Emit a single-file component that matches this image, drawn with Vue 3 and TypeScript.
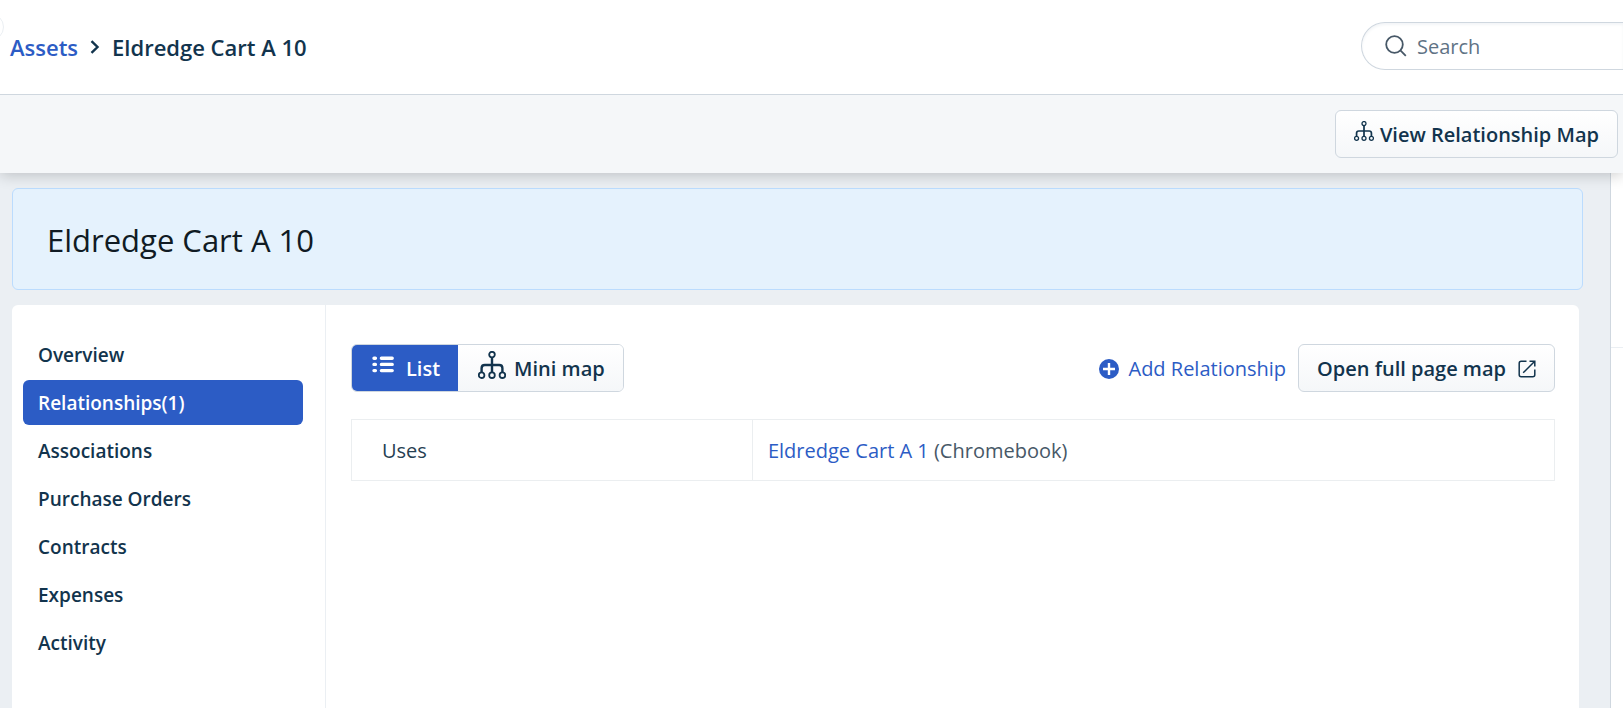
<script setup lang="ts">
import { ref } from 'vue'

interface NavItem {
  id: string
  label: string
}

const navItems: NavItem[] = [
  { id: 'overview', label: 'Overview' },
  { id: 'relationships', label: 'Relationships(1)' },
  { id: 'associations', label: 'Associations' },
  { id: 'purchase-orders', label: 'Purchase Orders' },
  { id: 'contracts', label: 'Contracts' },
  { id: 'expenses', label: 'Expenses' },
  { id: 'activity', label: 'Activity' },
]

const activeNav = ref('relationships')
const view = ref<'list' | 'map'>('list')
const query = ref('')
</script>

<template>
  <div class="page">
    <header class="topbar">
      <button class="collapse" type="button" aria-label="Toggle menu"></button>
      <nav class="crumbs" aria-label="Breadcrumb">
        <a href="#assets">Assets</a>
        <svg class="chevron" viewBox="0 0 10 16" aria-hidden="true">
          <path d="M1.5 2.2 7.5 8l-6 5.8" />
        </svg>
        <span>Eldredge Cart A 10</span>
      </nav>
      <label class="search">
        <svg viewBox="0 0 22 22" aria-hidden="true">
          <circle cx="9.5" cy="9.5" r="8.3" />
          <path d="m15.4 15.4 5.4 5.4" />
        </svg>
        <input v-model="query" type="text" placeholder="Search" aria-label="Search" />
      </label>
    </header>

    <div class="actions">
      <button class="btn view-map" type="button">
        <svg class="tree small" viewBox="0 0 28 28" aria-hidden="true">
          <circle cx="14" cy="3.6" r="2.8" />
          <circle cx="3.6" cy="24.2" r="2.8" />
          <circle cx="14" cy="24.2" r="2.8" />
          <circle cx="24.4" cy="24.2" r="2.8" />
          <path d="M14 6.4v15M3.6 21.4v-4.2q0-3.2 3.2-3.2h14.4q3.2 0 3.2 3.2v4.2" />
        </svg>
        View Relationship Map
      </button>
    </div>

    <div class="body">
      <main class="content">
        <section class="banner">
          <h1>Eldredge Cart A 10</h1>
        </section>

        <div class="card">
          <nav class="side" aria-label="Asset sections">
            <a
              v-for="item in navItems"
              :key="item.id"
              :href="'#' + item.id"
              :class="{ active: item.id === activeNav }"
              @click.prevent="activeNav = item.id"
            >{{ item.label }}</a>
          </nav>

          <section class="panel">
            <div class="toolbar">
              <div class="toggle">
                <button type="button" :class="{ on: view === 'list' }" @click="view = 'list'">
                  <svg class="list-icon" viewBox="0 0 22 17" aria-hidden="true">
                    <path d="M2 2.2h1.4M2 8.4h1.4M2 14.6h1.4M9.4 2.2h10.8M9.4 8.4h10.8M9.4 14.6h10.8" />
                  </svg>
                  List
                </button>
                <button type="button" :class="{ on: view === 'map' }" @click="view = 'map'">
                  <svg class="tree" viewBox="0 0 28 28" aria-hidden="true">
                    <circle cx="14" cy="3.6" r="2.8" />
                    <circle cx="3.6" cy="24.2" r="2.8" />
                    <circle cx="14" cy="24.2" r="2.8" />
                    <circle cx="24.4" cy="24.2" r="2.8" />
                    <path d="M14 6.4v15M3.6 21.4v-4.2q0-3.2 3.2-3.2h14.4q3.2 0 3.2 3.2v4.2" />
                  </svg>
                  Mini map
                </button>
              </div>
              <a class="add" href="#add">
                <svg viewBox="0 0 20 20" aria-hidden="true">
                  <circle cx="10" cy="10" r="10" />
                  <path d="M10 4v12M4 10h12" />
                </svg>
                Add Relationship
              </a>
              <button class="btn open-map" type="button">
                Open full page map
                <svg viewBox="0 0 18 18" aria-hidden="true">
                  <path d="M8.5 1.2H3.2q-2 0-2 2v11.6q0 2 2 2h11.6q2 0 2-2V9.5M11.5 1.2h5.3v5.3M16.5 1.5 5.2 12.8" />
                </svg>
              </button>
            </div>

            <table>
              <tbody>
                <tr>
                  <th scope="row">Uses</th>
                  <td><a href="#cart-a-1">Eldredge Cart A 1</a> (Chromebook)</td>
                </tr>
              </tbody>
            </table>
          </section>
        </div>
      </main>
      <aside class="rail"><div class="rail-head"></div></aside>
    </div>
  </div>
</template>

<style>
body {
  margin: 0;
  overflow: hidden;
}
</style>

<style scoped>
.page {
  display: flex;
  flex-direction: column;
  min-height: 100vh;
  font-family: 'Open Sans', 'Noto Sans', sans-serif;
  font-size: 20px;
  line-height: 28px;
  color: #12344d;
  background: #ebeff3;
}
.page * {
  box-sizing: border-box;
}
a {
  color: #2c5cc5;
  text-decoration: none;
}
button,
input {
  font: inherit;
  color: inherit;
}
svg {
  flex: none;
  fill: none;
  stroke: currentColor;
}
.topbar {
  position: relative;
  z-index: 2;
  display: flex;
  align-items: center;
  justify-content: space-between;
  height: 95px;
  padding: 0 0 2px 10px;
  background: #fff;
  border-bottom: 1px solid #cfd7df;
}
.collapse {
  position: absolute;
  left: -24px;
  top: 13px;
  width: 28px;
  height: 28px;
  padding: 0;
  background: #fff;
  border: 1px solid #ebeff3;
  border-radius: 50%;
}
.crumbs {
  display: flex;
  align-items: center;
  padding-top: 2px;
  font-size: 22px;
  font-weight: 600;
}
.chevron {
  width: 10px;
  height: 16px;
  margin: 0 12px;
  stroke-width: 2.4;
}
.search {
  display: flex;
  align-items: center;
  gap: 10px;
  width: 262px;
  height: 48px;
  padding-left: 23px;
  color: #475867;
  border: 1px solid #cfd7df;
  border-right: 0;
  border-radius: 24px 0 0 24px;
  box-shadow: inset 0 2px 3px #f3f5f7;
}
.search svg {
  width: 22px;
  height: 22px;
  stroke-width: 1.8;
}
.search input {
  flex: 1;
  min-width: 0;
  padding: 2px 0 0;
  border: 0;
  outline: 0;
  background: none;
}
.search input::placeholder {
  color: #5f7385;
  opacity: 1;
}
.actions {
  position: relative;
  z-index: 1;
  display: flex;
  justify-content: flex-end;
  padding: 15px 5px;
  background: #f5f7f9;
  box-shadow: 0 2px 14px rgba(0, 0, 0, 0.2);
}
.btn {
  display: flex;
  align-items: center;
  height: 48px;
  padding: 2px 18px 0;
  font-weight: 600;
  white-space: nowrap;
  background: linear-gradient(#fff, #f5f7f9);
  border: 1px solid #cfd7df;
  border-radius: 6px;
}
.tree {
  width: 28px;
  height: 28px;
  margin-bottom: 8px;
  stroke-width: 1.8;
}
.tree path {
  stroke-width: 2.4;
}
.tree.small {
  width: 20px;
  height: 20px;
}
.view-map {
  gap: 6px;
}
.body {
  flex: 1;
  display: flex;
}
.content {
  flex: 1;
  display: flex;
  flex-direction: column;
  gap: 15px;
  padding: 15px 27px 0 12px;
}
.banner {
  padding: 33px 34px 31px;
  background: #e5f2fd;
  border: 1px solid #bbdcfe;
  border-radius: 6px;
}
h1 {
  margin: 0;
  font-size: 31px;
  line-height: 36px;
  font-weight: 400;
  color: #101b24;
}
.card {
  flex: 1;
  display: flex;
  margin-right: 4px;
  background: #fff;
  border-radius: 6px 6px 0 0;
}
.side {
  display: flex;
  flex-direction: column;
  gap: 3px;
  width: 314px;
  padding: 27px 22px 0 11px;
  border-right: 1px solid #ebeff3;
}
.side a {
  height: 45px;
  padding-left: 15px;
  font-size: 19px;
  line-height: 46px;
  font-weight: 600;
  color: #12344d;
  border-radius: 6px;
}
.side a.active {
  color: #fff;
  background: #2c5cc5;
}
.panel {
  flex: 1;
  padding: 39px 24px 0 25px;
}
.toolbar {
  display: flex;
  align-items: center;
  margin-bottom: 27px;
}
.toggle {
  display: flex;
  height: 48px;
  overflow: hidden;
  border: 1px solid #cfd7df;
  border-radius: 6px;
}
.toggle button {
  display: flex;
  align-items: center;
  gap: 8px;
  padding: 2px 18px 0 20px;
  font-weight: 600;
  background: linear-gradient(#fff, #f5f7f9);
  border: 0;
}
.toggle button.on {
  gap: 12px;
  color: #fff;
  background: #2c5cc5;
}
.list-icon {
  width: 22px;
  height: 17px;
  margin-bottom: 10px;
  stroke-width: 3.4;
  stroke-linecap: round;
}
.add {
  display: flex;
  align-items: center;
  gap: 9px;
  margin-left: auto;
  margin-right: 12px;
  padding-top: 2px;
}
.add svg {
  width: 20px;
  height: 20px;
  fill: #2c5cc5;
  stroke: none;
}
.add path {
  stroke: #fff;
  stroke-width: 2.4;
}
.open-map {
  gap: 12px;
}
.open-map svg {
  width: 18px;
  height: 18px;
  stroke-width: 1.5;
}
table {
  width: 100%;
  table-layout: fixed;
  border-collapse: collapse;
}
th,
td {
  height: 61px;
  padding: 2px 15px 0;
  text-align: left;
  font-weight: 400;
  border: 1px solid #ebeef0;
}
th {
  width: 33.33%;
  padding-left: 30px;
  color: #264052;
}
td {
  color: #475867;
}
.rail {
  width: 13px;
  background: #fff;
  border-left: 1px solid #cfd7df;
}
.rail-head {
  height: 175px;
  border-bottom: 1px solid #ebeff3;
}
</style>
